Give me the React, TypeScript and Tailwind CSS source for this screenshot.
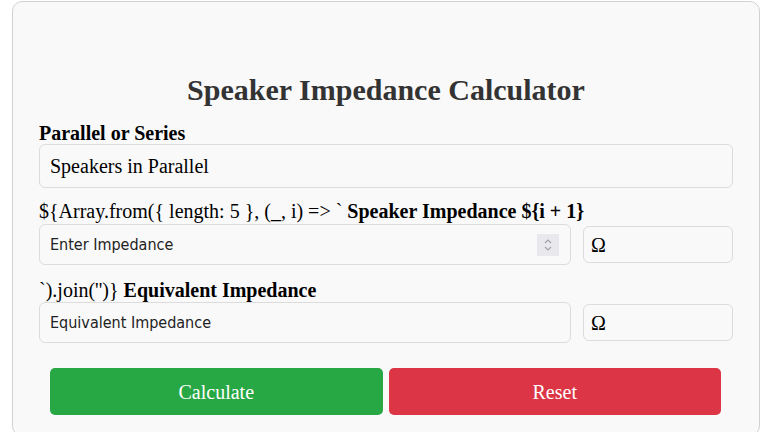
const serif = "font-['Liberation_Serif','Times_New_Roman',serif]";
const sans = "font-['DejaVu_Sans_Condensed','DejaVu_Sans','Verdana',sans-serif]";

function Spinner() {
  return (
    <span className="flex h-[22px] w-[22px] flex-col items-center justify-center bg-[#e9e9ed]">
      <svg width="10" height="16" viewBox="0 0 10 16" fill="none" stroke="#a0a0a8" strokeWidth="1.1">
        <path d="M2 6 L5 3 L8 6" />
        <path d="M2 10 L5 13 L8 10" />
      </svg>
    </span>
  );
}

function ImpedanceRow({ text, spinner }: { text: string; spinner?: boolean }) {
  return (
    <div className="flex items-center gap-[12px]">
      <div className="flex h-[41px] flex-1 items-center justify-between rounded-[6px] border border-[#dcdcdc] bg-[#f9f9f9] pl-[10px] pr-[11px]">
        <span className={`${sans} text-[16px] text-[#222]`}>{text}</span>
        {spinner && <Spinner />}
      </div>
      <div className={`flex h-[37px] w-[150px] items-center rounded-[6px] border border-[#dcdcdc] bg-[#f9f9f9] px-[7px] ${serif} text-[20px] text-black`}>
        Ω
      </div>
    </div>
  );
}

export default function App() {
  return (
    <div className="min-h-screen bg-white pt-[1px]">
      <div className={`ml-[12px] w-[748px] rounded-[10px] border border-[#d2d2d2] bg-[#f9f9f9] px-[26px] pb-[20px] pt-[68px] ${serif}`}>
        <h2 className="h-[40px] text-center text-[30px] font-bold leading-[40px] text-[#333]">
          Speaker Impedance Calculator
        </h2>

        <div className="mt-[12px] h-[22px] text-[20px] font-bold leading-[22px] text-black">Parallel or Series</div>
        <div className="flex h-[44px] items-center rounded-[6px] border border-[#dcdcdc] bg-[#f9f9f9] px-[10px] text-[20px] text-black">
          Speakers in Parallel
        </div>

        <div className="mt-[12px] h-[22px] text-[20px] leading-[22px] text-black">
          {"${Array.from({ length: 5 }, (_, i) => ` "}
          <b>{"Speaker Impedance ${i + 1}"}</b>
        </div>
        <div className="mt-[2px]">
          <ImpedanceRow text="Enter Impedance" spinner />
        </div>

        <div className="mt-[14px] h-[22px] text-[20px] leading-[22px] text-black">
          {"`).join('')} "}
          <b>Equivalent Impedance</b>
        </div>
        <div className="mt-[1px]">
          <ImpedanceRow text="Equivalent Impedance" />
        </div>

        <div className="mt-[25px] flex gap-[6px] pl-[11px] pr-[12px]">
          <button className="h-[47px] flex-1 rounded-[5px] bg-[#28a745] text-[20px] text-white">Calculate</button>
          <button className="h-[47px] flex-1 rounded-[5px] bg-[#dc3545] text-[20px] text-white">Reset</button>
        </div>
      </div>
    </div>
  );
}
